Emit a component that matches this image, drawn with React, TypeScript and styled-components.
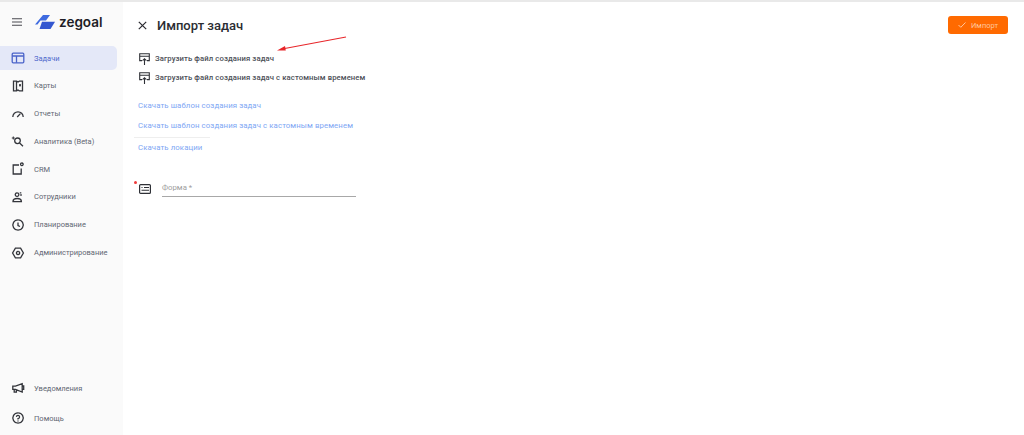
import React from "react";
import styled, { createGlobalStyle } from "styled-components";

const GlobalStyle = createGlobalStyle`
  html, body { margin: 0; padding: 0; background: #fff; }
  body { font-family: Roboto, "Liberation Sans", sans-serif; }
`;

const Page = styled.div`
  position: relative;
  width: 1024px;
  height: 435px;
  display: flex;
  overflow: hidden;
  border-top: 2px solid #e9e9e9;
  box-sizing: border-box;
`;

const Sidebar = styled.aside`
  width: 123px;
  flex: none;
  background: #fafafa;
  display: flex;
  flex-direction: column;
  padding-bottom: 5px;
  box-sizing: border-box;
`;

const Brand = styled.div`
  height: 40px;
  margin-bottom: 4px;
  display: flex;
  align-items: center;
  padding-left: 12px;
  gap: 13px;
`;

const BrandName = styled.span`
  font-family: Inter, Roboto, sans-serif;
  font-size: 13.5px;
  font-weight: 600;
  color: #1d1d26;
  margin-left: -9px;
`;

const Nav = styled.nav`
  display: flex;
  flex-direction: column;
  gap: 3.8px;
`;

const BottomNav = styled(Nav)`
  margin-top: auto;
  gap: 6px;
`;

const NavItem = styled.div<{ $active?: boolean }>`
  width: 117px;
  height: 24px;
  display: flex;
  align-items: center;
  padding-left: 11px;
  gap: 9px;
  box-sizing: border-box;
  border-radius: 0 5px 5px 0;
  background: ${(p) => (p.$active ? "#e4e8f8" : "transparent")};
  color: ${(p) => (p.$active ? "#5069cc" : "#626773")};
  font-size: 7.5px;
  white-space: nowrap;
`;

const Main = styled.main`
  flex: 1;
  padding: 13px 16px 0 15px;
  display: flex;
  flex-direction: column;
`;

const Header = styled.header`
  display: flex;
  align-items: center;
  height: 20px;
`;

const CloseBtn = styled.span`
  width: 19px;
  display: flex;
`;

const Title = styled.h1`
  margin: 0;
  font-size: 13px;
  font-weight: 500;
  color: #2b2d33;
  flex: 1;
`;

const ImportBtn = styled.button`
  height: 18px;
  width: 60px;
  border: 0;
  border-radius: 3px;
  background: #ff6a00;
  color: #ffc59c;
  font: 400 7.5px Roboto, sans-serif;
  display: flex;
  align-items: center;
  justify-content: center;
  gap: 5px;
  padding: 0;
`;

const UploadList = styled.div`
  margin-top: 18px;
  display: flex;
  flex-direction: column;
  gap: 8px;
`;

const UploadRow = styled.div`
  height: 11px;
  display: flex;
  align-items: center;
  gap: 5px;
  padding-left: 1px;
  font-size: 7.7px;
  font-weight: 500;
  letter-spacing: 0.1px;
  color: #4c4f57;
  white-space: nowrap;
`;

const Links = styled.div`
  margin-top: 17px;
  display: flex;
  flex-direction: column;
  width: 234px;
`;

const LinkText = styled.a`
  display: block;
  height: 20px;
  line-height: 12px;
  font-size: 7.8px;
  letter-spacing: 0.1px;
  color: #7ea6f4;
  white-space: nowrap;
`;

const LastLink = styled(LinkText)`
  border-top: 1px solid #eeeeee;
  margin-left: -4px;
  padding-left: 4px;
  width: 72px;
  margin-top: -3px;
  padding-top: 4px;
`;

const FormRow = styled.div`
  position: relative;
  margin-top: 19px;
  display: flex;
  align-items: center;
  gap: 11px;
  padding-left: 1px;
`;

const RequiredDot = styled.span`
  position: absolute;
  left: -4px;
  top: 0;
  width: 3px;
  height: 3px;
  border-radius: 50%;
  background: #ef3b3b;
`;

const FormField = styled.div`
  width: 194px;
  height: 15px;
  border-bottom: 1px solid #a8a8a8;
  font-size: 7.8px;
  color: #a0a0a0;
  line-height: 14px;
`;

const Arrow = styled.svg`
  position: absolute;
  left: 276px;
  top: 34px;
`;

const stroke = { fill: "none", stroke: "#33353b", strokeWidth: 1.3 };

const icons: Record<string, React.ReactNode> = {
  tasks: (
    <>
      <rect x="1.2" y="2.2" width="11.6" height="9.6" rx="1" fill="none" stroke="#4a63c9" strokeWidth="1.3" />
      <path d="M1.2 5h11.6M5.5 5v6.8" fill="none" stroke="#4a63c9" strokeWidth="1.3" />
    </>
  ),
  maps: (
    <path d="M2.5 2.2h3.2l1.3.8 1.3-.8h3.2v9.6H8.3L7 11l-1.3.8H2.5zM5.5 2.5v9M9 5v2.5M8 6.2h2" {...stroke} />
  ),
  reports: <path d="M1.8 10a5.2 5.2 0 0 1 10.4 0M6.2 10l3.2-3.4" {...stroke} />,
  analytics: (
    <>
      <path d="M6.5 4a2.8 2.8 0 1 0 2.8 2.8A2.8 2.8 0 0 0 6.5 4zM8.6 9l3.4 3.2" {...stroke} />
      <path d="M.8 4h3M2.3 2.5v3" fill="none" stroke="#33353b" strokeWidth="1" />
    </>
  ),
  crm: <path d="M8 3H2.2v9h8V6.5M10.8 1a1.3 1.3 0 1 0 .1 0" {...stroke} />,
  staff: (
    <path d="M6 2.8a1.8 1.8 0 1 0 .1 0M2 11.6c0-2 1.9-3.1 4.2-3.1s4.2 1.1 4.2 3.1zM8.8 2.8h1.5M9.2 5h1.6" {...stroke} />
  ),
  plan: <path d="M7 1.8a5.2 5.2 0 1 0 .1 0M7 4.5v3l2 1" {...stroke} />,
  admin: <path d="M4.4 2.2h5.2L12.4 7l-2.8 4.8H4.4L1.6 7zM7 5.4a1.6 1.6 0 1 0 .1 0" {...stroke} />,
  notify: <path d="M1.8 5.2v3.2h2.7l6.7 2.6V2.6L4.5 5.2zM3.2 8.4v2.8h2.2V9M11.2 5h1.5v3.4h-1.5" {...stroke} />,
  help: <path d="M7 1.8a5.2 5.2 0 1 0 .1 0M5.4 5.8A1.6 1.6 0 1 1 7 7.6v1M7 9.6v1" {...stroke} />,
};

const NavIcon = ({ name }: { name: string }) => (
  <svg width="14" height="14" viewBox="0 0 14 14" style={{ flex: "none" }}>
    {icons[name]}
  </svg>
);

const UploadIcon = () => (
  <svg width="11" height="12" viewBox="0 0 11 12" style={{ flex: "none" }}>
    <path d="M3 7.6H.7V.7h9.6v6.9H8M.7 3.2h9.6" fill="none" stroke="#2e3036" strokeWidth="1.1" />
    <path d="M5.5 12V5.6M3.6 7.6l1.9-1.9 1.9 1.9" fill="none" stroke="#2e3036" strokeWidth="1.1" />
  </svg>
);

const topItems = [
  { name: "tasks", label: "Задачи", active: true },
  { name: "maps", label: "Карты" },
  { name: "reports", label: "Отчеты" },
  { name: "analytics", label: "Аналитика (Beta)" },
  { name: "crm", label: "CRM" },
  { name: "staff", label: "Сотрудники" },
  { name: "plan", label: "Планирование" },
  { name: "admin", label: "Администрирование" },
];

const bottomItems = [
  { name: "notify", label: "Уведомления" },
  { name: "help", label: "Помощь" },
];

export default function App() {
  return (
    <>
      <GlobalStyle />
      <Page>
        <Sidebar>
          <Brand>
            <svg width="10" height="8" viewBox="0 0 10 8">
              <path d="M0 .7h10M0 4h10M0 7.3h10" stroke="#4a4a50" strokeWidth="1.1" />
            </svg>
            <svg width="20" height="14" viewBox="0 0 20 14">
              <path d="M0 9.5L8 0h7l-4 5.5H5.5L2.5 9.5z" fill="#3f6be0" />
              <path d="M7 6.7h13L15.5 14H4.5z" fill="#3457d0" />
            </svg>
            <BrandName>zegoal</BrandName>
          </Brand>
          <Nav>
            {topItems.map((it) => (
              <NavItem key={it.name} $active={it.active}>
                <NavIcon name={it.name} />
                {it.label}
              </NavItem>
            ))}
          </Nav>
          <BottomNav>
            {bottomItems.map((it) => (
              <NavItem key={it.name}>
                <NavIcon name={it.name} />
                {it.label}
              </NavItem>
            ))}
          </BottomNav>
        </Sidebar>
        <Main>
          <Header>
            <CloseBtn>
              <svg width="9" height="9" viewBox="0 0 9 9">
                <path d="M.8.8l7.4 7.4M8.2.8L.8 8.2" stroke="#2b2b30" strokeWidth="1.2" />
              </svg>
            </CloseBtn>
            <Title>Импорт задач</Title>
            <ImportBtn>
              <svg width="8" height="6" viewBox="0 0 8 6">
                <path d="M.5 3l2.3 2.3L7.5.5" fill="none" stroke="#ffc59c" strokeWidth="1" />
              </svg>
              Импорт
            </ImportBtn>
          </Header>
          <UploadList>
            <UploadRow>
              <UploadIcon />
              Загрузить файл создания задач
            </UploadRow>
            <UploadRow>
              <UploadIcon />
              Загрузить файл создания задач с кастомным временем
            </UploadRow>
          </UploadList>
          <Links>
            <LinkText>Скачать шаблон создания задач</LinkText>
            <LinkText>Скачать шаблон создания задач с кастомным временем</LinkText>
            <LastLink>Скачать локации</LastLink>
          </Links>
          <FormRow>
            <RequiredDot />
            <svg width="12" height="10" viewBox="0 0 12 10" style={{ flex: "none" }}>
              <rect x=".6" y=".6" width="10.8" height="8.8" rx="1" fill="none" stroke="#2e3036" strokeWidth="1.2" />
              <path d="M2.5 3.5h1M5 3.5h5M2.5 6.2h7.5" stroke="#2e3036" strokeWidth="1.1" />
            </svg>
            <FormField>Форма *</FormField>
          </FormRow>
        </Main>
        <Arrow width="72" height="20" viewBox="0 0 72 20">
          <path d="M70 1L6 13" stroke="#e8262a" strokeWidth="1.2" fill="none" />
          <path d="M1 14.5L9 10l.8 4.4z" fill="#e8262a" />
        </Arrow>
      </Page>
    </>
  );
}
